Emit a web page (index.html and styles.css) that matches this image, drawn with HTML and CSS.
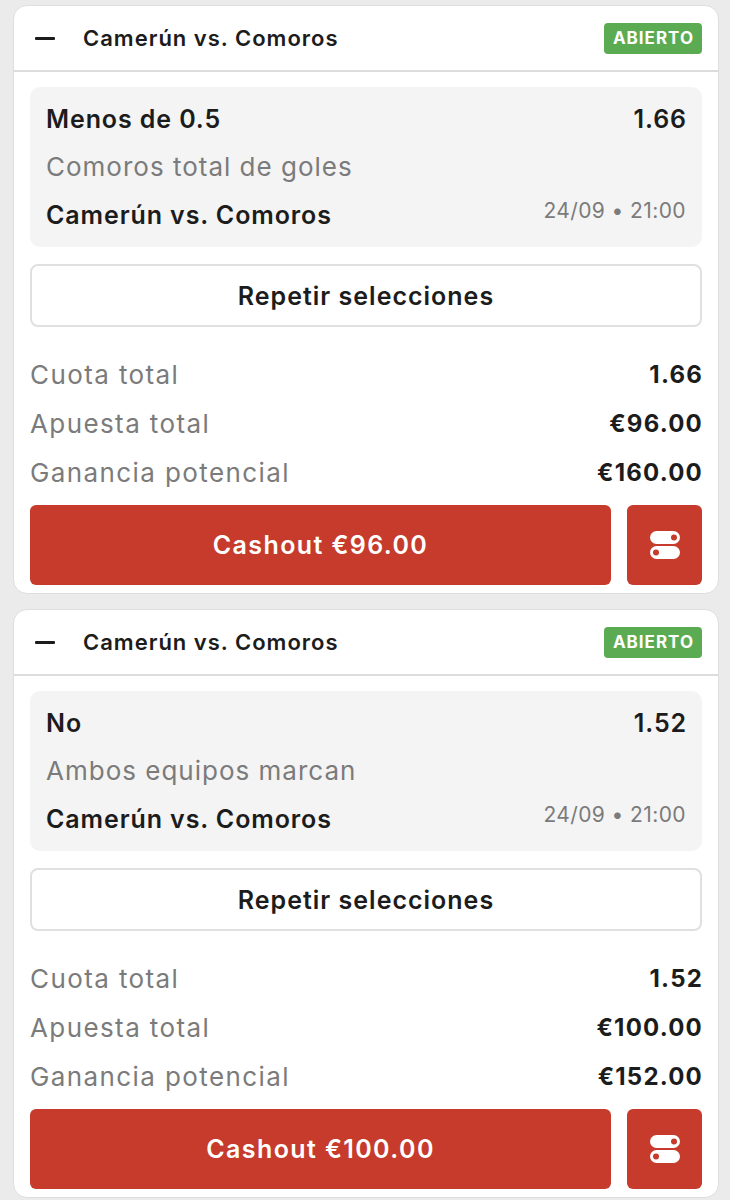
FILE: index.html
```html
<!DOCTYPE html>
<html>
<head>
    <meta name="viewport" content="width=device-width, initial-scale=1">
    <link rel="stylesheet" href="styles.css">
</head>
<body>

<div class="bet-card">
    <div class="bet-header">
        <span class="collapse-icon"></span>
        <span class="bet-title">Camerún vs. Comoros</span>
        <span class="badge">ABIERTO</span>
    </div>
    <div class="bet-body">
        <div class="selection">
            <div class="sel-row">
                <span class="sel-name">Menos de 0.5</span>
                <span class="sel-odds">1.66</span>
            </div>
            <div class="sel-row">
                <span class="sel-market">Comoros total de goles</span>
            </div>
            <div class="sel-row">
                <span class="sel-event">Camerún vs. Comoros</span>
                <span class="sel-date">24/09 • 21:00</span>
            </div>
        </div>
        <button class="repeat-btn">Repetir selecciones</button>
        <div class="summary">
            <div class="sum-row"><span class="sum-label">Cuota total</span><span class="sum-value">1.66</span></div>
            <div class="sum-row"><span class="sum-label">Apuesta total</span><span class="sum-value">€96.00</span></div>
            <div class="sum-row"><span class="sum-label">Ganancia potencial</span><span class="sum-value">€160.00</span></div>
        </div>
        <div class="actions">
            <button class="cashout-btn">Cashout €96.00</button>
            <button class="settings-btn">
                <svg width="30" height="30" viewBox="0 0 30 30">
                    <rect x="0" y="1" width="30" height="13" rx="6.5" fill="#fff"/>
                    <circle cx="24" cy="7.5" r="3" fill="#c63b2b"/>
                    <rect x="0" y="16" width="30" height="13" rx="6.5" fill="#fff"/>
                    <circle cx="6" cy="22.5" r="3" fill="#c63b2b"/>
                </svg>
            </button>
        </div>
    </div>
</div>

<div class="bet-card">
    <div class="bet-header">
        <span class="collapse-icon"></span>
        <span class="bet-title">Camerún vs. Comoros</span>
        <span class="badge">ABIERTO</span>
    </div>
    <div class="bet-body">
        <div class="selection">
            <div class="sel-row">
                <span class="sel-name">No</span>
                <span class="sel-odds">1.52</span>
            </div>
            <div class="sel-row">
                <span class="sel-market">Ambos equipos marcan</span>
            </div>
            <div class="sel-row">
                <span class="sel-event">Camerún vs. Comoros</span>
                <span class="sel-date">24/09 • 21:00</span>
            </div>
        </div>
        <button class="repeat-btn">Repetir selecciones</button>
        <div class="summary">
            <div class="sum-row"><span class="sum-label">Cuota total</span><span class="sum-value">1.52</span></div>
            <div class="sum-row"><span class="sum-label">Apuesta total</span><span class="sum-value">€100.00</span></div>
            <div class="sum-row"><span class="sum-label">Ganancia potencial</span><span class="sum-value">€152.00</span></div>
        </div>
        <div class="actions">
            <button class="cashout-btn">Cashout €100.00</button>
            <button class="settings-btn">
                <svg width="30" height="30" viewBox="0 0 30 30">
                    <rect x="0" y="1" width="30" height="13" rx="6.5" fill="#fff"/>
                    <circle cx="24" cy="7.5" r="3" fill="#c63b2b"/>
                    <rect x="0" y="16" width="30" height="13" rx="6.5" fill="#fff"/>
                    <circle cx="6" cy="22.5" r="3" fill="#c63b2b"/>
                </svg>
            </button>
        </div>
    </div>
</div>

</body>
</html>
```

FILE: styles.css
```css
body {
    font-family: 'Inter', sans-serif;
    background-color: #ebebeb;
    color: #1c1c1c;
    margin: 0;
    padding: 5px 11px 0 13px;
    display: flex;
    flex-direction: column;
    gap: 15px;
}
.bet-card {
    background-color: #fff;
    border: 1px solid #dedede;
    border-radius: 14px;
    overflow: hidden;
}
.bet-header {
    display: flex;
    align-items: center;
    height: 64px;
    padding: 0 16px 0 21px;
    border-bottom: 2px solid #dcdcdc;
}
.collapse-icon {
    width: 20px;
    height: 3px;
    background-color: #1c1c1c;
    border-radius: 1px;
    margin-right: 28px;
}
.bet-title {
    flex: 1;
    font-size: 22px;
    font-weight: 600;
    letter-spacing: 1px;
}
.badge {
    background-color: #5bab52;
    color: #fff;
    font-size: 17px;
    font-weight: 700;
    letter-spacing: 1px;
    padding: 0 8px 0 9px;
    height: 31px;
    line-height: 31px;
    border-radius: 4px;
}
.bet-body {
    padding: 15px 16px 8px;
}
.selection {
    background-color: #f4f4f4;
    border-radius: 10px;
    padding: 8px 16px;
}
.sel-row {
    display: flex;
    justify-content: space-between;
    align-items: baseline;
    height: 48px;
    line-height: 48px;
}
.sel-name, .sel-odds, .sel-event {
    font-size: 25px;
    font-weight: 600;
    letter-spacing: 0.9px;
}
.sel-odds {
    margin-right: -1px;
}
.sel-market {
    font-size: 26px;
    color: #7b7b7b;
    letter-spacing: 1px;
}
.sel-date {
    font-size: 21px;
    color: #7b7b7b;
    letter-spacing: 0.4px;
    position: relative;
    top: -6px;
}
.repeat-btn {
    display: block;
    width: 100%;
    height: 63px;
    margin-top: 17px;
    background-color: #fff;
    border: 2px solid #e0e0e0;
    border-radius: 8px;
    font-family: inherit;
    font-size: 25px;
    font-weight: 600;
    letter-spacing: 1px;
    color: #1c1c1c;
}
.summary {
    margin-top: 23px;
}
.sum-row {
    display: flex;
    justify-content: space-between;
    height: 49px;
    line-height: 49px;
}
.sum-label {
    font-size: 26px;
    color: #7b7b7b;
    letter-spacing: 1.4px;
}
.sum-value {
    font-size: 24px;
    font-weight: 700;
    letter-spacing: 1.2px;
    margin-right: -1px;
}
.actions {
    display: flex;
    gap: 16px;
    margin-top: 8px;
}
.cashout-btn {
    flex: 1;
    height: 80px;
    background-color: #c63b2b;
    border: none;
    border-radius: 6px;
    color: #fff;
    font-family: inherit;
    font-size: 25px;
    font-weight: 600;
    letter-spacing: 1.4px;
}
.settings-btn {
    width: 75px;
    height: 80px;
    background-color: #c63b2b;
    border: none;
    border-radius: 6px;
    display: flex;
    align-items: center;
    justify-content: center;
    padding: 0;
}
```
